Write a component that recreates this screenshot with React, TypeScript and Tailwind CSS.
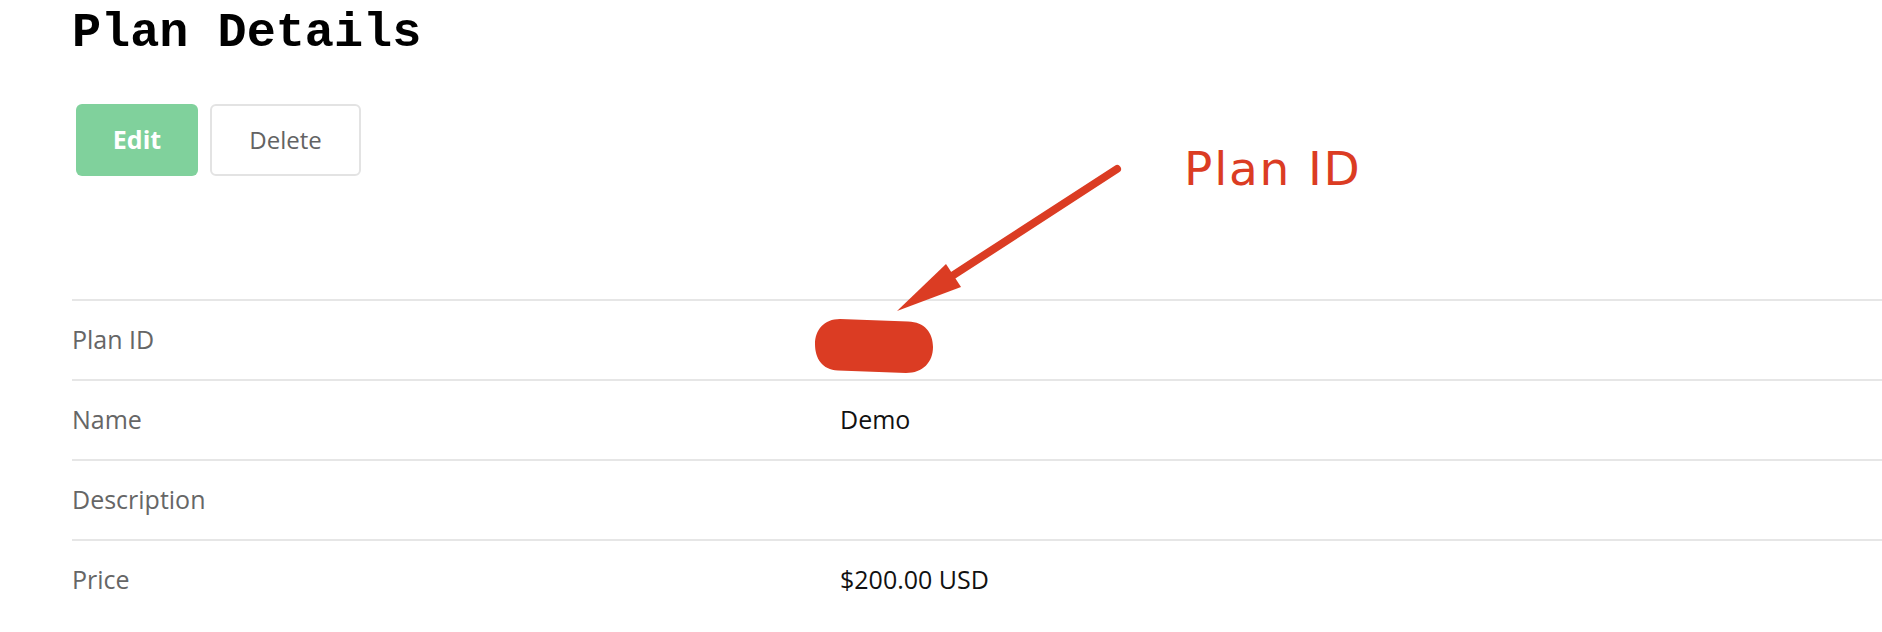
const rows = [
  { label: "Plan ID", value: "" },
  { label: "Name", value: "Demo" },
  { label: "Description", value: "" },
  { label: "Price", value: "$200.00 USD" },
];

function Annotation() {
  return (
    <div className="pointer-events-none absolute inset-0">
      <svg width="1882" height="632" viewBox="0 0 1882 632" className="absolute left-0 top-0">
        <line x1="1117" y1="169" x2="952" y2="276" stroke="#db3c23" strokeWidth="8" strokeLinecap="round" />
        <polygon points="897,311 946,264 961,287" fill="#db3c23" />
        <path
          d="M 840 319 L 908 321.5 C 925 322, 933 333, 933 347 C 933 362, 923 373, 906 373 L 838 370.5 C 822 370, 815 358, 815 344 C 815 330, 824 319, 840 319 Z"
          fill="#db3c23"
        />
      </svg>
      <span className="absolute left-[1184px] top-[145px] font-['DejaVu_Sans',sans-serif] text-[47px] leading-none tracking-[1.8px] text-[#db3c23]">
        Plan ID
      </span>
    </div>
  );
}

export default function App() {
  return (
    <div className="relative h-[632px] w-full overflow-hidden bg-white font-['Open_Sans',sans-serif]">
      <div className="pl-[72px] pt-[10px]">
        <h1 className="font-['Liberation_Mono',monospace] text-[48.5px] font-bold leading-[48px] text-black">
          Plan Details
        </h1>

        <div className="mt-[46px] flex gap-[12px] pl-[4px]">
          <button className="flex h-[72px] w-[122px] items-center justify-center rounded-md bg-[#80d19c] text-[25px] font-bold text-white">
            Edit
          </button>
          <button className="flex h-[72px] w-[151px] items-center justify-center rounded-md border-2 border-[#e3e3e3] bg-white text-[24px] text-[#636363]">
            Delete
          </button>
        </div>

        <div className="mt-[123px]">
          {rows.map((r) => (
            <div key={r.label} className="flex h-[80px] items-center border-t-2 border-[#e6e6e6] text-[25px]">
              <div className="w-[768px] text-[#666]">{r.label}</div>
              <div className="text-[#111]">{r.value}</div>
            </div>
          ))}
        </div>
      </div>

      <Annotation />
    </div>
  );
}
